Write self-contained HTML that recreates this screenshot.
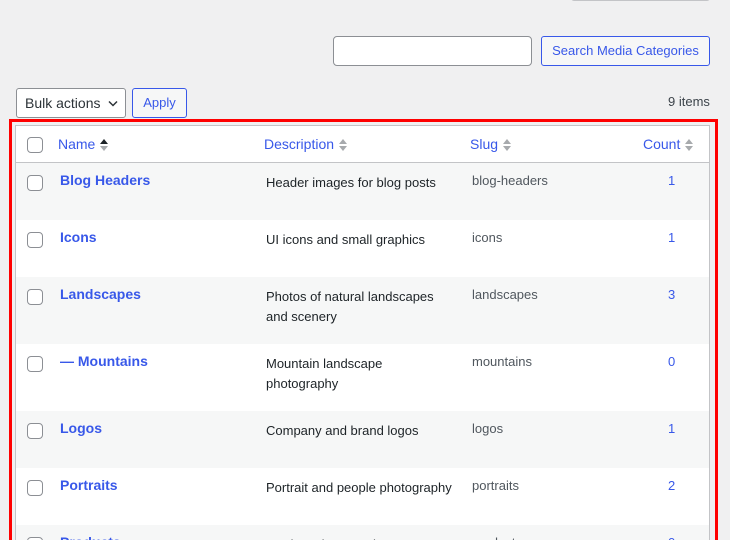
<!DOCTYPE html>
<html style="width:730px;height:540px;overflow:hidden"><head><style>
*{box-sizing:border-box;margin:0;padding:0}
body{width:730px;height:540px;overflow:hidden;background:#f0f0f1;font-family:"Liberation Sans",sans-serif;font-size:13px;color:#3c434a;position:relative}
.a{position:absolute}
.btn{border:1px solid #3858e9;color:#3858e9;background:#f6f7f7;border-radius:3px;font-size:13px;text-align:center}
.cb{position:absolute;left:27px;width:16px;height:16px;border:1px solid #8c8f94;border-radius:4px;background:#fff}
.row{position:absolute;left:16px;width:693px;overflow:hidden}
.nm{position:absolute;left:44px;top:9px;font-weight:bold;font-size:14px;color:#3858e9}
.ds{position:absolute;left:250px;top:10px;color:#1d2327;line-height:20px;width:190px}
.sl{position:absolute;left:456px;top:10px;color:#50575e}
.ct{position:absolute;left:652px;top:10px;color:#3858e9}
.hd{position:absolute;top:10px;color:#3858e9;font-size:14px}
.ar{display:inline-block;width:8px;vertical-align:middle;margin-left:5px}
</style></head><body>
<div class="a" style="left:571px;top:-10px;width:139px;height:11px;border:1px solid #c3c4c7;border-radius:3px;background:#fff"></div>
<div class="a" style="left:333px;top:36px;width:199px;height:30px;border:1px solid #8c8f94;border-radius:4px;background:#fff"></div>
<div class="a btn" style="left:541px;top:36px;width:169px;height:30px;line-height:28px">Search Media Categories</div>
<div class="a" style="left:16px;top:88px;width:110px;height:30px;border:1px solid #8c8f94;border-radius:3px;background:#fff;font-size:14px;color:#2c3338;line-height:28px;padding-left:8px">Bulk actions <svg width="10" height="8" style="position:absolute;right:7px;top:11px"><path d="M1 1.5L5 5.5L9 1.5" stroke="#2c3338" stroke-width="1.5" fill="none"/></svg></div>
<div class="a btn" style="left:132px;top:88px;width:55px;height:30px;line-height:28px">Apply</div>
<div class="a" style="left:668px;top:94px;color:#3c434a">9 items</div>
<div class="a" style="left:15px;top:125px;width:695px;height:415px;border:1px solid #c3c4c7;border-bottom:none;background:#fff;overflow:hidden">
<div class="row" style="left:0;top:0;height:37px;border-bottom:1px solid #c3c4c7;background:#fff">
<div class="cb" style="left:11px;top:11px"></div>
<div class="hd" style="left:42px">Name<svg class="ar" height="16" viewBox="0 0 8 16"><path d="M0 7L4 2L8 7Z" fill="#1d2327"/><path d="M0 9L4 14L8 9Z" fill="#a7aaad"/></svg></div>
<div class="hd" style="left:248px">Description<svg class="ar" height="16" viewBox="0 0 8 16"><path d="M0 7L4 2L8 7Z" fill="#a7aaad"/><path d="M0 9L4 14L8 9Z" fill="#a7aaad"/></svg></div>
<div class="hd" style="left:454px">Slug<svg class="ar" height="16" viewBox="0 0 8 16"><path d="M0 7L4 2L8 7Z" fill="#a7aaad"/><path d="M0 9L4 14L8 9Z" fill="#a7aaad"/></svg></div>
<div class="hd" style="left:627px">Count<svg class="ar" height="16" viewBox="0 0 8 16"><path d="M0 7L4 2L8 7Z" fill="#a7aaad"/><path d="M0 9L4 14L8 9Z" fill="#a7aaad"/></svg></div>
</div>
<div class="row" style="left:0;top:37px;height:57px;background:#f6f7f7"><div class="cb" style="left:11px;top:12px"></div><div class="nm">Blog Headers</div><div class="ds">Header images for blog posts</div><div class="sl">blog-headers</div><div class="ct">1</div></div>
<div class="row" style="left:0;top:94px;height:57px;background:#fff"><div class="cb" style="left:11px;top:12px"></div><div class="nm">Icons</div><div class="ds">UI icons and small graphics</div><div class="sl">icons</div><div class="ct">1</div></div>
<div class="row" style="left:0;top:151px;height:67px;background:#f6f7f7"><div class="cb" style="left:11px;top:12px"></div><div class="nm">Landscapes</div><div class="ds">Photos of natural landscapes and scenery</div><div class="sl">landscapes</div><div class="ct">3</div></div>
<div class="row" style="left:0;top:218px;height:67px;background:#fff"><div class="cb" style="left:11px;top:12px"></div><div class="nm">— Mountains</div><div class="ds">Mountain landscape photography</div><div class="sl">mountains</div><div class="ct">0</div></div>
<div class="row" style="left:0;top:285px;height:57px;background:#f6f7f7"><div class="cb" style="left:11px;top:12px"></div><div class="nm">Logos</div><div class="ds">Company and brand logos</div><div class="sl">logos</div><div class="ct">1</div></div>
<div class="row" style="left:0;top:342px;height:57px;background:#fff"><div class="cb" style="left:11px;top:12px"></div><div class="nm">Portraits</div><div class="ds">Portrait and people photography</div><div class="sl">portraits</div><div class="ct">2</div></div>
<div class="row" style="left:0;top:399px;height:16px;background:#f6f7f7"><div class="cb" style="left:11px;top:12px"></div><div class="nm">Products</div><div class="ds">Product photography</div><div class="sl">products</div><div class="ct">0</div></div>
</div>
<div class="a" style="left:9px;top:119px;width:709px;height:421px;border:3px solid #ff0000;border-bottom:none"></div>
</body></html>
